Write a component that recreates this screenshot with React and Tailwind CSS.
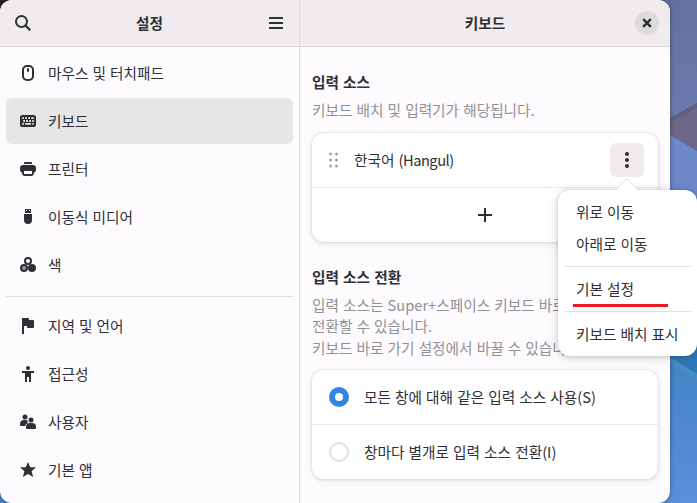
import React, { useState } from 'react'

// 16x16 symbolic icons used in the sidebar
const icons = {
  mouse: (
    <>
      <rect x="3" y="1" width="10" height="14" rx="4" fill="none" stroke="currentColor" strokeWidth="2" />
      <rect x="7" y="3" width="2" height="4" rx="1" />
    </>
  ),
  keyboard: (
    <>
      <rect x="0" y="2" width="16" height="12" rx="2.6" />
      <g fill="#e6e6e6">
        <path d="M2.200 4.200h1.800v1.800H2.200zM5.200 4.200H7v1.800H5.200zM8.200 4.200H10v1.800H8.200zM11.200 4.200h2.600v1.800h-2.600zM3.200 7.100H5v1.800H3.200zM6.200 7.100H8v1.800H6.200zM9.200 7.100H11v1.800H9.200zM12.200 7.100h1.600v1.800h-1.600zM2.200 10.100h1.800v1.700H2.200zM5.200 10.100H11v1.700H5.200zM12.200 10.100h1.600v1.700h-1.600z" />
      </g>
    </>
  ),
  printer: (
    <>
      <path d="M4 2a1 1 0 0 1 1-1h6a1 1 0 0 1 1 1v1H4z" />
      <path fillRule="evenodd" d="M3 4h10a3 3 0 0 1 3 3v2a3 3 0 0 1-2 2.8V12a3 3 0 0 1-3 3H5a3 3 0 0 1-3-3v-.2A3 3 0 0 1 0 9V7a3 3 0 0 1 3-3zm1 6v3h8v-3z" />
    </>
  ),
  usb: (
    <>
      <path fillRule="evenodd" d="M5 0h6v4H5zm1 1v1h1V1zm3 0v1h1V1z" />
      <path d="M4 5h8v6a4 4 0 0 1-8 0z" />
    </>
  ),
  color: (
    <>
      <circle cx="8" cy="4" r="3" fill="none" stroke="currentColor" strokeWidth="2" />
      <circle cx="4" cy="11" r="3" fill="#969696" stroke="currentColor" strokeWidth="2" />
      <circle cx="12" cy="11" r="4" />
    </>
  ),
  flag: <path d="M2 0h6a1 1 0 0 1 1 1v1h4a1 1 0 0 1 1 1v6a1 1 0 0 1-1 1H8a1 1 0 0 1-1-1V8H4v8H2z" />,
  access: (
    <>
      <circle cx="8" cy="2" r="2" />
      <path d="M2 5h12v2h-3v9H9v-5H7v5H5V7H2z" />
    </>
  ),
  users: (
    <>
      <circle cx="5" cy="3" r="2.500" />
      <path d="M0 10a4 4 0 0 1 4-4h2a3.500 3.500 0 0 1 1.500.4A4 4 0 0 0 8 9a5 5 0 0 0-3 3H1a1 1 0 0 1-1-1z" />
      <circle cx="11" cy="6" r="2.500" />
      <path d="M6 13a4 4 0 0 1 4-4h2a4 4 0 0 1 4 4v1a1 1 0 0 1-1 1H7a1 1 0 0 1-1-1z" />
    </>
  ),
  star: <path d="M8 0l2.300 5.300H16l-4.400 4L13.200 15 8 12l-5.200 3L4.400 9.300 0 5.300h5.700z" />,
}

const topItems = [
  { icon: 'mouse', label: '마우스 및 터치패드' },
  { icon: 'keyboard', label: '키보드' },
  { icon: 'printer', label: '프린터' },
  { icon: 'usb', label: '이동식 미디어' },
  { icon: 'color', label: '색' },
]

const bottomItems = [
  { icon: 'flag', label: '지역 및 언어' },
  { icon: 'access', label: '접근성' },
  { icon: 'users', label: '사용자' },
  { icon: 'star', label: '기본 앱' },
]

function SidebarItem ({ item, active, onClick }) {
  return (
    <button onClick={onClick} className={`flex h-[46px] w-full shrink-0 items-center gap-3 rounded-md px-3.5 text-left [word-spacing:0.8px] ${active ? 'bg-[#e6e6e6]' : ''}`}>
      <svg viewBox="0 0 16 16" className="size-4 shrink-0" fill="currentColor">{icons[item.icon]}</svg>
      <span className="pb-0.5">{item.label}</span>
    </button>
  )
}

function Radio ({ checked, label, onClick }) {
  return (
    <button onClick={onClick} className="flex h-[54px] w-full items-center gap-[15px] pl-[17px] text-left [word-spacing:0.8px]">
      <span className={`size-5 shrink-0 rounded-full ${checked ? 'border-[6px] border-[#3584e4] bg-white' : 'border-2 border-[#e4dfe2] bg-white'}`} />
      <span>{label}</span>
    </button>
  )
}

function Popover () {
  return (
    <div className="absolute top-[190px] left-[558px] h-[166px] w-[139px] rounded-xl bg-white px-1.5 pt-1.5 shadow-[0_1px_5px_1px_rgba(0,0,0,0.12),0_2px_14px_3px_rgba(0,0,0,0.06),0_0_0_1px_rgba(0,0,0,0.04)]">
      <svg viewBox="0 0 24 13" className="absolute -top-3 left-[57px] h-[13px] w-6">
        <path d="M0 13L1 12 12 .5 23 12 24 13z" fill="#fff" />
        <path d="M0 12L1 11.500 12 .5 23 11.500 24 12" fill="none" stroke="#000" strokeOpacity=".1" />
      </svg>
      <div className="flex h-8 items-center px-3 pb-0.5">위로 이동</div>
      <div className="flex h-8 items-center px-3 pb-0.5">아래로 이동</div>
      <div className="my-1.5 h-px bg-[#e2e0e1]" />
      <div className="relative flex h-8 items-center px-3 pb-0.5">
        기본 설정
        <span className="absolute top-[31px] left-[9px] h-[3px] w-[95px] bg-[#ed1c24]" />
      </div>
      <div className="my-1.5 h-px bg-[#e2e0e1]" />
      <div className="flex h-8 items-center px-3 pb-0.5 whitespace-nowrap">키보드 배치 표시</div>
    </div>
  )
}

const cardClass = 'rounded-xl bg-white shadow-[0_0_0_1px_rgba(0,0,0,0.03),0_1px_3px_1px_rgba(0,0,0,0.07),0_2px_6px_2px_rgba(0,0,0,0.03)]'

export default function App () {
  const [current, setCurrent] = useState('키보드')
  const [shared, setShared] = useState(true)

  const renderItem = (item) => (
    <SidebarItem key={item.label} item={item} active={current === item.label} onClick={() => setCurrent(item.label)} />
  )

  return (
    <div className="relative h-[503px] w-[697px] overflow-hidden bg-[#4a86c8] font-['Noto_Sans_CJK_KR',sans-serif] text-[14.667px] leading-[21px] [word-spacing:0.8px] text-[#2e3033]">
      {/* wallpaper */}
      <svg viewBox="0 0 697 503" className="absolute inset-0 h-full w-full">
        <defs>
          <linearGradient id="sky" x1="0" y1="0" x2="0" y2="1">
            <stop offset="0" stopColor="#65719f" />
            <stop offset="1" stopColor="#6b7bb0" />
          </linearGradient>
          <linearGradient id="low" x1="0" y1="0" x2="0" y2="1">
            <stop offset="0" stopColor="#4181c2" />
            <stop offset="1" stopColor="#5a90dc" />
          </linearGradient>
        </defs>
        <rect width="20" height="20" fill="#222" />
        <rect x="650" width="47" height="130" fill="url(#sky)" />
        <path d="M660 124L697 103V152L660 129z" fill="#6c6689" />
        <path d="M660 124L697 103V108L660 127z" fill="#625e7c" />
        <path d="M660 129L697 151V240H660z" fill="#6d89cb" />
        <rect x="650" y="340" width="47" height="163" fill="url(#low)" />
        <path d="M660 340H697V374L660 351z" fill="#2f78b6" />
        <path d="M660 351L697 374V381L660 358z" fill="#4b8ac8" />
      </svg>

      <div className="relative flex h-[503px] w-[670px] overflow-hidden rounded-xl bg-[#fefbff] shadow-[0_0_5px_rgba(0,0,0,0.4)]">
        <aside className="flex w-[300px] shrink-0 flex-col border-r border-[#dddadd]">
          <header className="flex h-[47px] items-center justify-between border-b border-[#d8d4d7] bg-[#efebee] px-[15px]">
            <svg viewBox="0 0 16 16" className="size-4" fill="none" stroke="currentColor" strokeWidth="2">
              <circle cx="6.500" cy="6.500" r="5.500" />
              <path d="M10.500 10.500L15.300 15.300" strokeWidth="2.200" />
            </svg>
            <h1 className="pb-0.5 font-bold">설정</h1>
            <svg viewBox="0 0 16 16" className="size-4" fill="currentColor">
              <path d="M1 2h14v2H1zM1 7h14v2H1zM1 12h14v2H1z" />
            </svg>
          </header>
          <nav className="flex flex-col gap-0.5 px-1.5 pt-[3px]">
            {topItems.map(renderItem)}
            <div className="mt-1.5 mb-1 h-px shrink-0 bg-[#dedcde]" />
            {bottomItems.map(renderItem)}
          </nav>
        </aside>

        <main className="flex min-w-0 flex-1 flex-col">
          <header className="grid h-[47px] shrink-0 grid-cols-[1fr_auto_1fr] items-center border-b border-[#d8d4d7] bg-[#efebee] px-[11px]">
            <h1 className="col-start-2 pb-0.5 font-bold">키보드</h1>
            <button className="flex size-6 items-center justify-center justify-self-end rounded-full bg-[#dedbde]">
              <svg viewBox="0 0 10 10" className="size-2.5" stroke="currentColor" strokeWidth="2.400">
                <path d="M1.200 1.200L8.800 8.800M8.800 1.200L1.200 8.800" />
              </svg>
            </button>
          </header>

          <div className="px-3 pt-6">
            <h2 className="font-bold">입력 소스</h2>
            <p className="mt-[7px] text-[#919093]">키보드 배치 및 입력기가 해당됩니다.</p>
            <div className={`mt-[13px] h-[109px] ${cardClass}`}>
              <div className="flex h-[55px] items-center border-b border-[#ebebeb] pr-3.5 pl-[17px]">
                <svg viewBox="0 0 10 16" className="h-4 w-2.5" fill="#a3a3a3">
                  {[2, 8, 14].map((y) => [1.5, 7.5].map((x) => <circle key={`${x}-${y}`} cx={x} cy={y} r="1.500" />))}
                </svg>
                <span className="ml-[15px] flex-1 pb-0.5">한국어 <span className="tracking-[-0.5px]">(Hangul)</span></span>
                <button className="flex size-[34px] items-center justify-center rounded-md bg-[#efebee]">
                  <svg viewBox="0 0 16 16" className="size-4" fill="currentColor">
                    <circle cx="8" cy="2" r="2" />
                    <circle cx="8" cy="8" r="2" />
                    <circle cx="8" cy="14" r="2" />
                  </svg>
                </button>
              </div>
              <button className="flex h-[54px] w-full items-center justify-center">
                <svg viewBox="0 0 16 16" className="size-4" fill="currentColor">
                  <path d="M7 1h2v6h6v2H9v6H7V9H1V7h6z" />
                </svg>
              </button>
            </div>

            <h2 className="mt-6 font-bold">입력 소스 전환</h2>
            <p className="mt-[7px] leading-[21.4px] whitespace-nowrap text-[#919093]">
              입력 소스는 Super+스페이스 키보드 바로<br />
              전환할 수 있습니다.<br />
              키보드 바로 가기 설정에서 바꿀 수 있습니
            </p>
            <div className={`mt-[11.3px] h-[109px] ${cardClass}`}>
              <Radio checked={shared} label="모든 창에 대해 같은 입력 소스 사용(S)" onClick={() => setShared(true)} />
              <div className="h-px bg-[#ebebeb]" />
              <Radio checked={!shared} label="창마다 별개로 입력 소스 전환(I)" onClick={() => setShared(false)} />
            </div>
          </div>
        </main>
      </div>

      <Popover />
    </div>
  )
}
